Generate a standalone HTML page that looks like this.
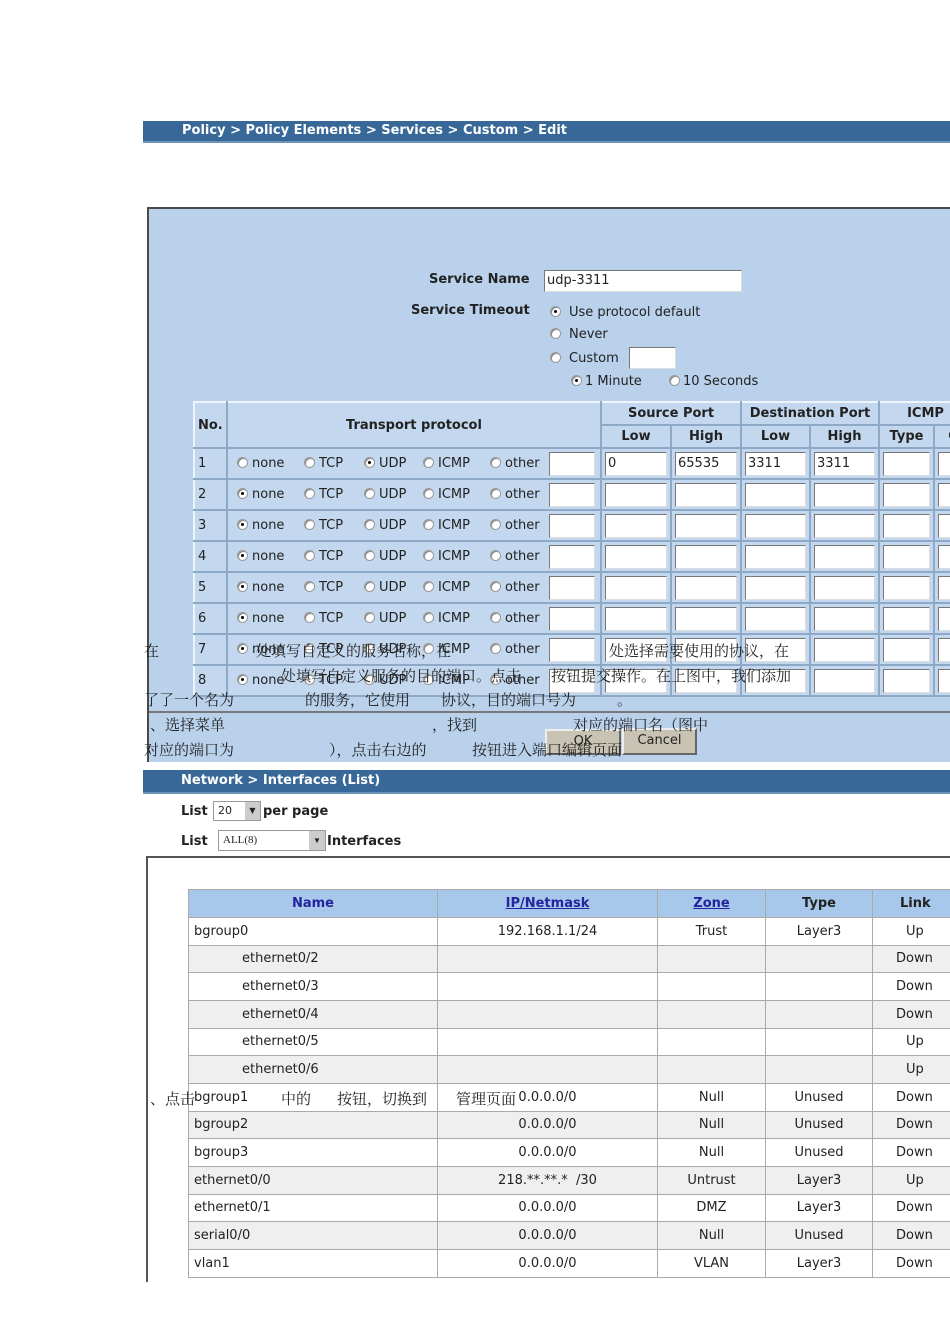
<!DOCTYPE html>
<html><head><meta charset="utf-8">
<style>
*{box-sizing:border-box;margin:0;padding:0}
body{width:950px;height:1344px;background:#fff;position:relative;overflow:hidden;font-family:"DejaVu Sans","Liberation Sans",sans-serif;font-size:13px;color:#222}
.a{position:absolute}
.bar{position:absolute;left:143px;width:807px;height:22px;background:#386898;color:#fff;font-weight:bold;font-size:13px;line-height:20px;padding-left:39px;border-bottom:2px solid #6f94b9}
.panel{position:absolute;left:147px;top:207px;width:803px;height:555px;background:#b9d1eb;border-top:2px solid #4a4a4a;border-left:2px solid #4a4a4a}
.r{display:inline-block;width:11px;height:11px;border-radius:50%;background:#fff;border:1px solid #999;vertical-align:-1px;position:relative;margin-right:4px;box-shadow:inset 1px 1px #888}
.r.on::after{content:"";position:absolute;left:3px;top:3px;width:3px;height:3px;border-radius:50%;background:#000}
.inp{display:inline-block;background:#fff;border:1px solid #777;border-right-color:#ddd;border-bottom-color:#ddd;height:21px}
table{border-collapse:collapse}
.t1 td{border:2px solid #eef4fb;border-right-color:#8ea9c6;border-bottom-color:#8ea9c6;background:#c3d8ef;height:31px;padding:0 3px;white-space:nowrap}
.t1 .h{font-weight:bold;text-align:center;height:23px}
.t1 td .inp{width:100%;height:24px;vertical-align:middle;font-size:13px;line-height:22px;padding-left:2px}
.t1 td.p{padding:0 0 0 9px}
.p span.o{display:inline-block}
.p span.o1{width:67px}.p span.o2{width:60px}.p span.o3{width:59px}.p span.o4{width:67px}.p span.o5{width:59px}
.t1 td.p .inp{width:46px}
.t2 td{border:1px solid #aaa;height:27.67px;padding:0 5px;white-space:nowrap}
.t2 tr:nth-child(odd) td{background:#efefef}
.t2 tr:nth-child(even) td{background:#fff}
.t2 tr.hd td{background:#a7c8ea;font-weight:bold;text-align:center;height:28px}
.t2 .c{text-align:center}
.lk{color:#2424a0;text-decoration:underline}
.zh{position:absolute;font-family:"Liberation Serif","Noto Serif CJK SC",serif;font-size:15px;line-height:18px;color:#222;white-space:nowrap}
.btn{position:absolute;background:#c9c3b3;border:2px solid #eee;border-right-color:#666;border-bottom-color:#666;font-size:13px;text-align:center;line-height:22px}
</style></head><body>

<div class="bar" style="top:121px">Policy &gt; Policy Elements &gt; Services &gt; Custom &gt; Edit</div>
<div class="panel"></div>

<div class="a" style="left:429px;top:272px;font-weight:bold">Service Name</div>
<div class="a inp" style="left:544px;top:270px;width:198px;height:22px;line-height:20px;padding-left:2px">udp-3311</div>
<div class="a" style="left:411px;top:303px;font-weight:bold">Service Timeout</div>
<div class="a" style="left:550px;top:305px"><span class="r on" style="margin-right:8px"></span>Use protocol default</div>
<div class="a" style="left:550px;top:327px"><span class="r" style="margin-right:8px"></span>Never</div>
<div class="a" style="left:550px;top:351px"><span class="r" style="margin-right:8px"></span>Custom</div>
<div class="a inp" style="left:629px;top:347px;width:47px;height:22px"></div>
<div class="a" style="left:571px;top:374px"><span class="r on" style="margin-right:3px"></span>1 Minute</div>
<div class="a" style="left:669px;top:374px"><span class="r" style="margin-right:3px"></span>10 Seconds</div>

<table class="a t1" style="left:193px;top:401px;width:780px">
<tr><td class="h" rowspan="2" style="width:33px;text-align:left">No.</td><td class="h" rowspan="2" style="width:374px">Transport protocol</td><td class="h" colspan="2">Source Port</td><td class="h" colspan="2">Destination Port</td><td class="h" colspan="2">ICMP</td></tr>
<tr><td class="h" style="width:70px">Low</td><td class="h" style="width:70px">High</td><td class="h" style="width:69px">Low</td><td class="h" style="width:69px">High</td><td class="h" style="width:55px">Type</td><td class="h">C</td></tr>
<tr><td>1</td><td class="p"><span class="o o1"><span class="r"></span>none</span><span class="o o2"><span class="r"></span>TCP</span><span class="o o3"><span class="r on"></span>UDP</span><span class="o o4"><span class="r"></span>ICMP</span><span class="o o5"><span class="r"></span>other</span><span class="inp"></span></td><td><span class="inp">0</span></td><td><span class="inp">65535</span></td><td><span class="inp">3311</span></td><td><span class="inp">3311</span></td><td><span class="inp"></span></td><td><span class="inp"></span></td></tr>
<tr><td>2</td><td class="p"><span class="o o1"><span class="r on"></span>none</span><span class="o o2"><span class="r"></span>TCP</span><span class="o o3"><span class="r"></span>UDP</span><span class="o o4"><span class="r"></span>ICMP</span><span class="o o5"><span class="r"></span>other</span><span class="inp"></span></td><td><span class="inp"></span></td><td><span class="inp"></span></td><td><span class="inp"></span></td><td><span class="inp"></span></td><td><span class="inp"></span></td><td><span class="inp"></span></td></tr>
<tr><td>3</td><td class="p"><span class="o o1"><span class="r on"></span>none</span><span class="o o2"><span class="r"></span>TCP</span><span class="o o3"><span class="r"></span>UDP</span><span class="o o4"><span class="r"></span>ICMP</span><span class="o o5"><span class="r"></span>other</span><span class="inp"></span></td><td><span class="inp"></span></td><td><span class="inp"></span></td><td><span class="inp"></span></td><td><span class="inp"></span></td><td><span class="inp"></span></td><td><span class="inp"></span></td></tr>
<tr><td>4</td><td class="p"><span class="o o1"><span class="r on"></span>none</span><span class="o o2"><span class="r"></span>TCP</span><span class="o o3"><span class="r"></span>UDP</span><span class="o o4"><span class="r"></span>ICMP</span><span class="o o5"><span class="r"></span>other</span><span class="inp"></span></td><td><span class="inp"></span></td><td><span class="inp"></span></td><td><span class="inp"></span></td><td><span class="inp"></span></td><td><span class="inp"></span></td><td><span class="inp"></span></td></tr>
<tr><td>5</td><td class="p"><span class="o o1"><span class="r on"></span>none</span><span class="o o2"><span class="r"></span>TCP</span><span class="o o3"><span class="r"></span>UDP</span><span class="o o4"><span class="r"></span>ICMP</span><span class="o o5"><span class="r"></span>other</span><span class="inp"></span></td><td><span class="inp"></span></td><td><span class="inp"></span></td><td><span class="inp"></span></td><td><span class="inp"></span></td><td><span class="inp"></span></td><td><span class="inp"></span></td></tr>
<tr><td>6</td><td class="p"><span class="o o1"><span class="r on"></span>none</span><span class="o o2"><span class="r"></span>TCP</span><span class="o o3"><span class="r"></span>UDP</span><span class="o o4"><span class="r"></span>ICMP</span><span class="o o5"><span class="r"></span>other</span><span class="inp"></span></td><td><span class="inp"></span></td><td><span class="inp"></span></td><td><span class="inp"></span></td><td><span class="inp"></span></td><td><span class="inp"></span></td><td><span class="inp"></span></td></tr>
<tr><td>7</td><td class="p"><span class="o o1"><span class="r on"></span>none</span><span class="o o2"><span class="r"></span>TCP</span><span class="o o3"><span class="r"></span>UDP</span><span class="o o4"><span class="r"></span>ICMP</span><span class="o o5"><span class="r"></span>other</span><span class="inp"></span></td><td><span class="inp"></span></td><td><span class="inp"></span></td><td><span class="inp"></span></td><td><span class="inp"></span></td><td><span class="inp"></span></td><td><span class="inp"></span></td></tr>
<tr><td>8</td><td class="p"><span class="o o1"><span class="r on"></span>none</span><span class="o o2"><span class="r"></span>TCP</span><span class="o o3"><span class="r"></span>UDP</span><span class="o o4"><span class="r"></span>ICMP</span><span class="o o5"><span class="r"></span>other</span><span class="inp"></span></td><td><span class="inp"></span></td><td><span class="inp"></span></td><td><span class="inp"></span></td><td><span class="inp"></span></td><td><span class="inp"></span></td><td><span class="inp"></span></td></tr>
</table>
<div class="a" style="left:149px;top:711px;width:801px;height:2px;background:#777"></div>
<div class="btn" style="left:545px;top:729px;width:76px;height:26px">OK</div>
<div class="btn" style="left:622px;top:728px;width:75px;height:27px">Cancel</div>

<div class="zh" style="left:144px;top:643px">在</div>
<div class="zh" style="left:256px;top:643px">处填写自定义的服务名称，在</div>
<div class="zh" style="left:609px;top:643px">处选择需要使用的协议，在</div>
<div class="zh" style="left:281px;top:668px">处填写自定义服务的目的端口。点击</div>
<div class="zh" style="left:551px;top:668px">按钮提交操作。在上图中，我们添加</div>
<div class="zh" style="left:144px;top:692px">了了一个名为</div>
<div class="zh" style="left:305px;top:692px">的服务，它使用</div>
<div class="zh" style="left:441px;top:692px">协议，目的端口号为</div>
<div class="zh" style="left:617px;top:692px">。</div>
<div class="zh" style="left:150px;top:717px">、选择菜单</div>
<div class="zh" style="left:432px;top:717px">，找到</div>
<div class="zh" style="left:573px;top:717px">对应的端口名（图中</div>
<div class="zh" style="left:144px;top:742px">对应的端口为</div>
<div class="zh" style="left:329px;top:742px">），点击右边的</div>
<div class="zh" style="left:472px;top:742px">按钮进入端口编辑页面</div>

<div class="bar" style="top:770px;height:24px;line-height:22px;padding-left:38px">Network &gt; Interfaces (List)</div>
<div class="a" style="left:181px;top:804px;font-weight:bold">List</div>
<div class="a" style="left:213px;top:801px;width:48px;height:20px;border:1px solid #999;background:#fff;font-size:11px;padding-left:4px;line-height:17px">20<span style="position:absolute;right:0;top:0;width:15px;height:18px;background:#ccc;font-size:8px;text-align:center;line-height:18px">▼</span></div>
<div class="a" style="left:263px;top:804px;font-weight:bold">per page</div>
<div class="a" style="left:181px;top:834px;font-weight:bold">List</div>
<div class="a" style="left:218px;top:830px;width:108px;height:21px;border:1px solid #999;background:#fff;font-size:11px;padding-left:4px;line-height:18px;font-family:'Liberation Serif',serif">ALL(8)<span style="position:absolute;right:0;top:0;width:16px;height:19px;background:#ccc;font-size:8px;text-align:center;line-height:19px">▼</span></div>
<div class="a" style="left:327px;top:834px;font-weight:bold">Interfaces</div>
<div class="a" style="left:146px;top:856px;width:804px;height:2px;background:#555"></div>
<div class="a" style="left:146px;top:856px;width:2px;height:426px;background:#555"></div>

<table class="a t2" style="left:188px;top:889px;width:770px">
<tr class="hd"><td style="width:249px"><span style="color:#2424a0">Name</span></td><td style="width:220px"><span class="lk">IP/Netmask</span></td><td style="width:108px"><span class="lk">Zone</span></td><td style="width:107px">Type</td><td style="text-align:left;padding-left:27px">Link</td></tr>
<tr><td>bgroup0</td><td class="c">192.168.1.1/24</td><td class="c">Trust</td><td class="c">Layer3</td><td style="padding-left:33px">Up</td></tr>
<tr><td style="padding-left:53px">ethernet0/2</td><td></td><td></td><td></td><td style="padding-left:23px">Down</td></tr>
<tr><td style="padding-left:53px">ethernet0/3</td><td></td><td></td><td></td><td style="padding-left:23px">Down</td></tr>
<tr><td style="padding-left:53px">ethernet0/4</td><td></td><td></td><td></td><td style="padding-left:23px">Down</td></tr>
<tr><td style="padding-left:53px">ethernet0/5</td><td></td><td></td><td></td><td style="padding-left:33px">Up</td></tr>
<tr><td style="padding-left:53px">ethernet0/6</td><td></td><td></td><td></td><td style="padding-left:33px">Up</td></tr>
<tr><td>bgroup1</td><td class="c">0.0.0.0/0</td><td class="c">Null</td><td class="c">Unused</td><td style="padding-left:23px">Down</td></tr>
<tr><td>bgroup2</td><td class="c">0.0.0.0/0</td><td class="c">Null</td><td class="c">Unused</td><td style="padding-left:23px">Down</td></tr>
<tr><td>bgroup3</td><td class="c">0.0.0.0/0</td><td class="c">Null</td><td class="c">Unused</td><td style="padding-left:23px">Down</td></tr>
<tr><td>ethernet0/0</td><td class="c">218.**.**.* &nbsp;/30</td><td class="c">Untrust</td><td class="c">Layer3</td><td style="padding-left:33px">Up</td></tr>
<tr><td>ethernet0/1</td><td class="c">0.0.0.0/0</td><td class="c">DMZ</td><td class="c">Layer3</td><td style="padding-left:23px">Down</td></tr>
<tr><td>serial0/0</td><td class="c">0.0.0.0/0</td><td class="c">Null</td><td class="c">Unused</td><td style="padding-left:23px">Down</td></tr>
<tr><td>vlan1</td><td class="c">0.0.0.0/0</td><td class="c">VLAN</td><td class="c">Layer3</td><td style="padding-left:23px">Down</td></tr>
</table>

<div class="zh" style="left:150px;top:1091px">、点击</div>
<div class="zh" style="left:281px;top:1091px">中的</div>
<div class="zh" style="left:337px;top:1091px">按钮，切换到</div>
<div class="zh" style="left:456px;top:1091px">管理页面</div>
</body></html>
